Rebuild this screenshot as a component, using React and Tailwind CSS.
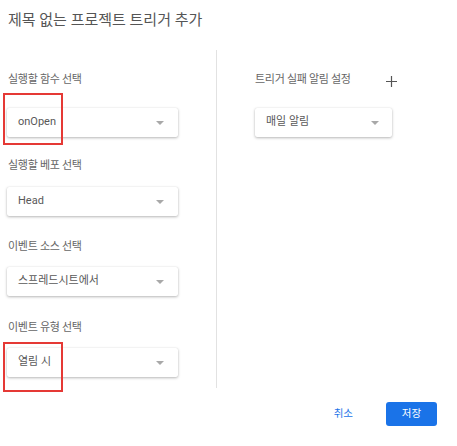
import React from 'react';

const font = { fontFamily: 'Roboto, "Noto Sans CJK KR", sans-serif' };

const Caret = () => (
  <svg width="8" height="4" viewBox="0 0 8 4" className="shrink-0">
    <path d="M0 0 L8 0 L4 4 Z" fill="#a8a8a8" />
  </svg>
);

const SelectBox = ({ value, className = '' }) => (
  <div
    className={`flex h-[29px] items-center justify-between rounded-[2px] bg-white pl-[11px] pr-[14px] text-[11px] text-[#585858] shadow-[0_1px_3px_rgba(0,0,0,0.28),0_0_1px_rgba(0,0,0,0.12)] ${className}`}
  >
    <span>{value}</span>
    <Caret />
  </div>
);

const Label = ({ children, className = '' }) => (
  <p className={`h-[14px] text-[11px] leading-[14px] tracking-[-0.3px] text-[#666] ${className}`}>
    {children}
  </p>
);

const App = () => {
  return (
    <div className="relative h-[446px] w-[457px] overflow-hidden bg-white" style={font}>
      {/* Title */}
      <h2 className="pl-[8px] pt-[8px] text-[15px] leading-[24px] text-[#555]">
        제목 없는 프로젝트 트리거 추가
      </h2>

      <div className="mt-[18px] flex h-[338px]">
        {/* Left column */}
        <div className="w-[216px] pl-[7px] pt-[23px]">
          <Label className="pl-px">실행할 함수 선택</Label>
          <SelectBox value="onOpen" className="mt-[21px] w-[171px]" />

          <Label className="mt-[22px] pl-px">실행할 베포 선택</Label>
          <SelectBox value="Head" className="mt-[14px] w-[171px]" />

          <Label className="mt-[24px] pl-px">이벤트 소스 선택</Label>
          <SelectBox value="스프레드시트에서" className="mt-[13px] w-[171px]" />

          <Label className="mt-[25px] pl-px">이벤트 유형 선택</Label>
          <SelectBox value="열림 시" className="mt-[13px] w-[171px]" />
        </div>

        <div className="w-px bg-[#e2e2e2]" />

        {/* Right column */}
        <div className="pl-[38px] pt-[23px]">
          <div className="flex w-[142px] items-center justify-between">
            <Label>트리거 실패 알림 설정</Label>
            <svg width="11" height="11" viewBox="0 0 11 11" className="mt-[3px]">
              <path d="M5.5 0 V11 M0 5.5 H11" stroke="#555" strokeWidth="1.2" />
            </svg>
          </div>
          <SelectBox value="매일 알림" className="mt-[21px] w-[137px] !pr-[13px]" />
        </div>
      </div>

      {/* Actions */}
      <div className="mt-[14px] flex items-center justify-end pr-[20px]">
        <button className="mr-[33px] text-[10.5px] text-[#1a73e8]">취소</button>
        <button className="h-[24px] w-[51px] rounded-[3px] bg-[#1a73e8] text-[10.5px] text-white">
          저장
        </button>
      </div>

      {/* Annotation boxes */}
      <div className="absolute left-[3px] top-[93px] h-[52px] w-[60px] border-2 border-[#e53935]" />
      <div className="absolute left-[3px] top-[342px] h-[50px] w-[60px] border-2 border-[#e53935]" />
    </div>
  );
};

export default App;
